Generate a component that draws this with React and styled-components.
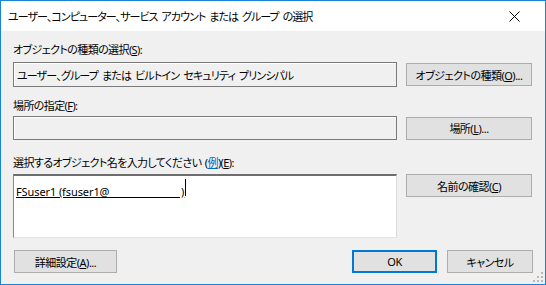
import styled, { createGlobalStyle } from "styled-components";

const GlobalStyle = createGlobalStyle`
  html, body {
    margin: 0;
    padding: 0;
    background: #f0f0f0;
  }
  body {
    font-family: "Noto Sans", "Noto Sans CJK JP", sans-serif;
    font-size: 11px;
    color: #000;
  }
`;

const Frame = styled.div`
  position: relative;
  box-sizing: border-box;
  width: 546px;
  height: 285px;
  border: 1px solid #1883d7;
  background: #f0f0f0;
  display: flex;
  flex-direction: column;
  font-feature-settings: "palt";
  letter-spacing: -0.6px;
`;

const TitleBar = styled.div`
  height: 30px;
  background: #fff;
  display: flex;
  align-items: center;
  justify-content: space-between;
  padding: 0 0 0 7px;
`;

const TitleText = styled.span`
  font-size: 11px;
  letter-spacing: -0.95px;
  word-spacing: 2px;
`;

const CloseBox = styled.div`
  width: 46px;
  height: 30px;
  display: flex;
  align-items: center;
  justify-content: center;
  margin-right: 8px;
`;

const Body = styled.div`
  padding: 0 12px;
  display: flex;
  flex-direction: column;
`;

const Section = styled.div`
  display: grid;
  grid-template-columns: 384px 126px;
  column-gap: 9px;
  align-items: ${(p) => p.$align || "center"};
  margin-top: ${(p) => p.$top}px;
`;

const Label = styled.div`
  grid-column: 1 / 3;
  line-height: 14px;
  height: 14px;
  margin-bottom: ${(p) => p.$gap}px;
  white-space: nowrap;
  word-spacing: 1px;
`;

const Key = styled.span`
  text-decoration: underline;
  text-underline-offset: 1px;
`;

const Link = styled.span`
  color: #0066cc;
  text-decoration: underline;
  text-underline-offset: 1px;
`;

const Field = styled.div`
  box-sizing: border-box;
  height: ${(p) => p.$h}px;
  border: 1px solid #7a7a7a;
  box-shadow: inset 1px 1px 0 #fff;
  background: #f0f0f0;
  padding: 0 3px;
  display: flex;
  align-items: center;
  white-space: pre;
  overflow: hidden;
  letter-spacing: -0.85px;
  word-spacing: 2px;
`;

const TextArea = styled.div`
  box-sizing: border-box;
  height: 64px;
  background: #fff;
  border-style: solid;
  border-width: 2px 1px 1px 1px;
  border-color: #6d6d6d #dcdcdc #e3e3e3 #8a8a8a;
  padding: 3px 2px;
  white-space: pre;
`;

const Entry = styled.span`
  display: inline-flex;
  align-items: center;
  height: 16px;
  text-decoration: underline;
  text-underline-offset: 1px;
  letter-spacing: -0.1px;
`;

const Caret = styled.span`
  display: inline-block;
  width: 1px;
  height: 17px;
  background: #000;
  margin-left: 1px;
`;

const Button = styled.button`
  box-sizing: border-box;
  height: 23px;
  width: ${(p) => p.$w || 126}px;
  padding: 0;
  background: #e1e1e1;
  border: ${(p) => (p.$primary ? "2px solid #0078d7" : "1px solid #adadad")};
  font-family: inherit;
  font-size: 11px;
  font-feature-settings: "palt";
  letter-spacing: -0.5px;
  color: #000;
  white-space: nowrap;
`;

const Footer = styled.div`
  display: flex;
  align-items: center;
  margin-top: 12px;
  padding: 0 12px 0 13px;
`;

const Spacer = styled.div`
  flex: 1;
`;

const Gap = styled.div`
  width: 10px;
`;

const Grip = styled.svg`
  position: absolute;
  right: 2px;
  bottom: 2px;
`;

export default function App() {
  return (
    <>
      <GlobalStyle />
      <Frame>
        <TitleBar>
          <TitleText>ユーザー、コンピューター、サービス アカウント または グループ の選択</TitleText>
          <CloseBox>
            <svg width="11" height="11" viewBox="0 0 11 11">
              <path d="M0.5 0.5 L10.5 10.5 M10.5 0.5 L0.5 10.5" stroke="#000" strokeWidth="1" />
            </svg>
          </CloseBox>
        </TitleBar>
        <Body>
          <Section $top={12}>
            <Label $gap={5}>
              オブジェクトの種類の選択(<Key>S</Key>):
            </Label>
            <Field $h={25}>ユーザー、グループ または ビルトイン セキュリティ プリンシパル</Field>
            <Button>
              オブジェクトの種類(<Key>O</Key>)...
            </Button>
          </Section>
          <Section $top={12}>
            <Label $gap={3}>
              場所の指定(<Key>F</Key>):
            </Label>
            <Field $h={24} />
            <Button>
              場所(<Key>L</Key>)...
            </Button>
          </Section>
          <Section $top={16} $align="start">
            <Label $gap={4}>
              選択するオブジェクト名を入力してください (<Link>例</Link>)(<Key>E</Key>):
            </Label>
            <TextArea>
              <Entry>{"FSuser1 (fsuser1@                          )"}</Entry>
              <Caret />
            </TextArea>
            <Button>
              名前の確認(<Key>C</Key>)
            </Button>
          </Section>
        </Body>
        <Footer>
          <Button $w={103}>
            詳細設定(<Key>A</Key>)...
          </Button>
          <Spacer />
          <Button $w={85} $primary>
            OK
          </Button>
          <Gap />
          <Button $w={86}>キャンセル</Button>
        </Footer>
        <Grip width="10" height="10" viewBox="0 0 10 10">
          <rect x="8" y="0" width="2" height="2" fill="#b8b8b8" />
          <rect x="4" y="4" width="2" height="2" fill="#b8b8b8" />
          <rect x="8" y="4" width="2" height="2" fill="#b8b8b8" />
          <rect x="0" y="8" width="2" height="2" fill="#b8b8b8" />
          <rect x="4" y="8" width="2" height="2" fill="#b8b8b8" />
          <rect x="8" y="8" width="2" height="2" fill="#b8b8b8" />
        </Grip>
      </Frame>
    </>
  );
}
